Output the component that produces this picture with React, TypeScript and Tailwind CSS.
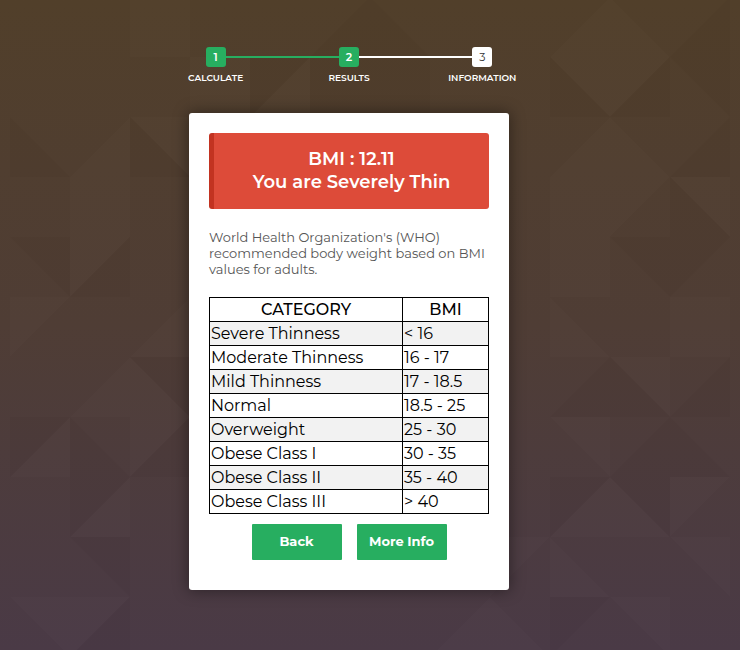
import clsx from "clsx";

type Corner = "tl" | "tr" | "bl" | "br" | "full";
type Tone = "light" | "dark";
type Facet = [col: number, row: number, corner: Corner, tone: Tone];

const CELL = 60;

const shapes: Record<Corner, string> = {
  tl: "M0 0H60L0 60Z",
  tr: "M0 0H60V60Z",
  bl: "M0 0L60 60H0Z",
  br: "M60 0V60H0Z",
  full: "M0 0H60V60H0Z",
};

const facets: Facet[] = [
  [5, 0, "br", "dark"], [6, 0, "bl", "dark"], [9, 0, "br", "light"],
  [10, 0, "bl", "light"], [11, 0, "br", "dark"], [2, 0, "full", "light"],
  [3, 1, "full", "light"], [4, 1, "tl", "dark"], [4, 1, "br", "light"],
  [5, 1, "full", "dark"], [6, 1, "full", "dark"],
  [9, 1, "bl", "dark"], [9, 1, "tr", "light"], [10, 1, "tl", "light"],
  [10, 1, "br", "dark"], [11, 1, "tr", "dark"],
  [0, 2, "bl", "dark"], [1, 2, "br", "light"], [2, 2, "bl", "dark"],
  [2, 2, "tr", "light"], [9, 2, "br", "light"],
  [10, 2, "bl", "light"], [11, 2, "br", "dark"],
  [1, 3, "full", "light"], [9, 3, "full", "light"], [10, 3, "tl", "light"],
  [11, 3, "tr", "light"], [11, 3, "bl", "dark"],
  [0, 4, "tr", "dark"], [1, 4, "tl", "light"], [1, 4, "br", "dark"],
  [9, 4, "full", "light"], [10, 4, "tr", "dark"], [11, 4, "tl", "dark"],
  [0, 5, "tl", "light"], [2, 5, "br", "light"], [9, 5, "bl", "light"],
  [11, 5, "full", "light"],
  [1, 6, "br", "light"], [2, 6, "bl", "light"],
  [2, 6, "tr", "dark"], [9, 6, "br", "dark"], [10, 6, "bl", "dark"],
  [10, 6, "tr", "light"], [11, 6, "br", "dark"],
  [0, 7, "tl", "dark"], [0, 7, "br", "light"], [1, 7, "bl", "dark"],
  [2, 7, "tl", "light"], [2, 7, "br", "dark"], [9, 7, "tr", "light"],
  [10, 7, "br", "dark"], [11, 7, "bl", "dark"],
  [1, 8, "tl", "dark"], [1, 8, "br", "light"],
  [9, 8, "tl", "dark"], [9, 8, "br", "light"],
  [10, 8, "tr", "dark"], [10, 8, "bl", "light"], [11, 8, "tl", "light"],
  [1, 9, "tr", "dark"], [8, 9, "tl", "light"], [9, 9, "bl", "light"],
  [11, 9, "tr", "light"],
  [0, 10, "tr", "light"], [1, 10, "tl", "light"], [1, 10, "br", "dark"],
  [7, 10, "br", "light"], [8, 10, "bl", "light"],
  [9, 10, "tl", "dark"], [10, 10, "tr", "light"],
];

const steps = [
  { label: "Calculate", done: true },
  { label: "Results", done: true },
  { label: "Information", done: false },
];

const categories = [
  ["Severe Thinness", "< 16"],
  ["Moderate Thinness", "16 - 17"],
  ["Mild Thinness", "17 - 18.5"],
  ["Normal", "18.5 - 25"],
  ["Overweight", "25 - 30"],
  ["Obese Class I", "30 - 35"],
  ["Obese Class II", "35 - 40"],
  ["Obese Class III", "> 40"],
];

function Backdrop() {
  return (
    <svg className="absolute inset-0 -z-10 h-full w-full" aria-hidden="true">
      {facets.map(([col, row, corner, tone]) => (
        <path
          key={`${col}-${row}-${corner}`}
          d={shapes[corner]}
          transform={`translate(${10 + col * CELL} ${row * CELL - 3})`}
          fill={tone === "light" ? "#fff" : "#000"}
          fillOpacity={tone === "light" ? 0.013 : 0.025}
        />
      ))}
    </svg>
  );
}

function lineColor(visible: boolean, done: boolean) {
  if (!visible) return "bg-transparent";
  return done ? "bg-[#27ae60]" : "bg-white";
}

function ProgressBar() {
  return (
    <ol className="grid w-full max-w-[400px] grid-cols-3">
      {steps.map((step, i) => {
        const next = steps[i + 1];
        return (
          <li key={step.label} className="flex flex-col items-center">
            <div className="flex w-full items-center">
              <span className={clsx("h-0.5 flex-1", lineColor(i > 0, step.done))} />
              <span
                className={clsx(
                  "size-5 rounded-[3px] text-center text-[11px] leading-5",
                  step.done ? "bg-[#27ae60] font-semibold text-white" : "bg-white text-[#333]",
                )}
              >
                {i + 1}
              </span>
              <span className={clsx("h-0.5 flex-1", lineColor(!!next, !!next?.done))} />
            </div>
            <span className="text-[9px] leading-[22px] font-semibold text-white uppercase">
              {step.label}
            </span>
          </li>
        );
      })}
    </ol>
  );
}

function ActionButton({ children }: { children: string }) {
  return (
    <button
      type="button"
      className="h-9 w-[90px] rounded-[1px] bg-[#27ae60] text-[13px] font-bold text-white"
    >
      {children}
    </button>
  );
}

export default function App() {
  return (
    <main className="relative isolate flex min-h-screen flex-col items-center bg-linear-to-b from-[#513f2a] via-[#4f3d35] to-[#4a3a46] pt-[47px] pr-[42px] pb-[60px] font-['Montserrat','Inter',sans-serif]">
      <Backdrop />
      <ProgressBar />

      <section className="mt-6 w-full max-w-[320px] rounded-[3px] bg-white px-5 pt-5 pb-[30px] shadow-[0_0_15px_1px_rgba(0,0,0,0.4)]">
        <h1 className="rounded-[3px] border-l-[5px] border-[#c23321] bg-[#dd4b39] py-[15px] text-center text-[18px] leading-[23px] font-semibold text-white">
          BMI : 12.11
          <br />
          You are Severely Thin
        </h1>

        <p className="mt-5 text-[13px] leading-4 text-[#555]">
          World Health Organization's (WHO) recommended body weight based on BMI values for adults.
        </p>

        <table className="mt-5 w-full table-fixed border-collapse text-base leading-[21px] text-black">
          <thead>
            <tr>
              <th className="w-[193px] border border-black p-px font-medium">CATEGORY</th>
              <th className="border border-black p-px font-medium">BMI</th>
            </tr>
          </thead>
          <tbody>
            {categories.map(([name, range]) => (
              <tr key={name} className="odd:bg-[#f2f2f2]">
                <td className="border border-black p-px">{name}</td>
                <td className="border border-black p-px">{range}</td>
              </tr>
            ))}
          </tbody>
        </table>

        <div className="mt-2.5 flex justify-center gap-[15px]">
          <ActionButton>Back</ActionButton>
          <ActionButton>More Info</ActionButton>
        </div>
      </section>
    </main>
  );
}
